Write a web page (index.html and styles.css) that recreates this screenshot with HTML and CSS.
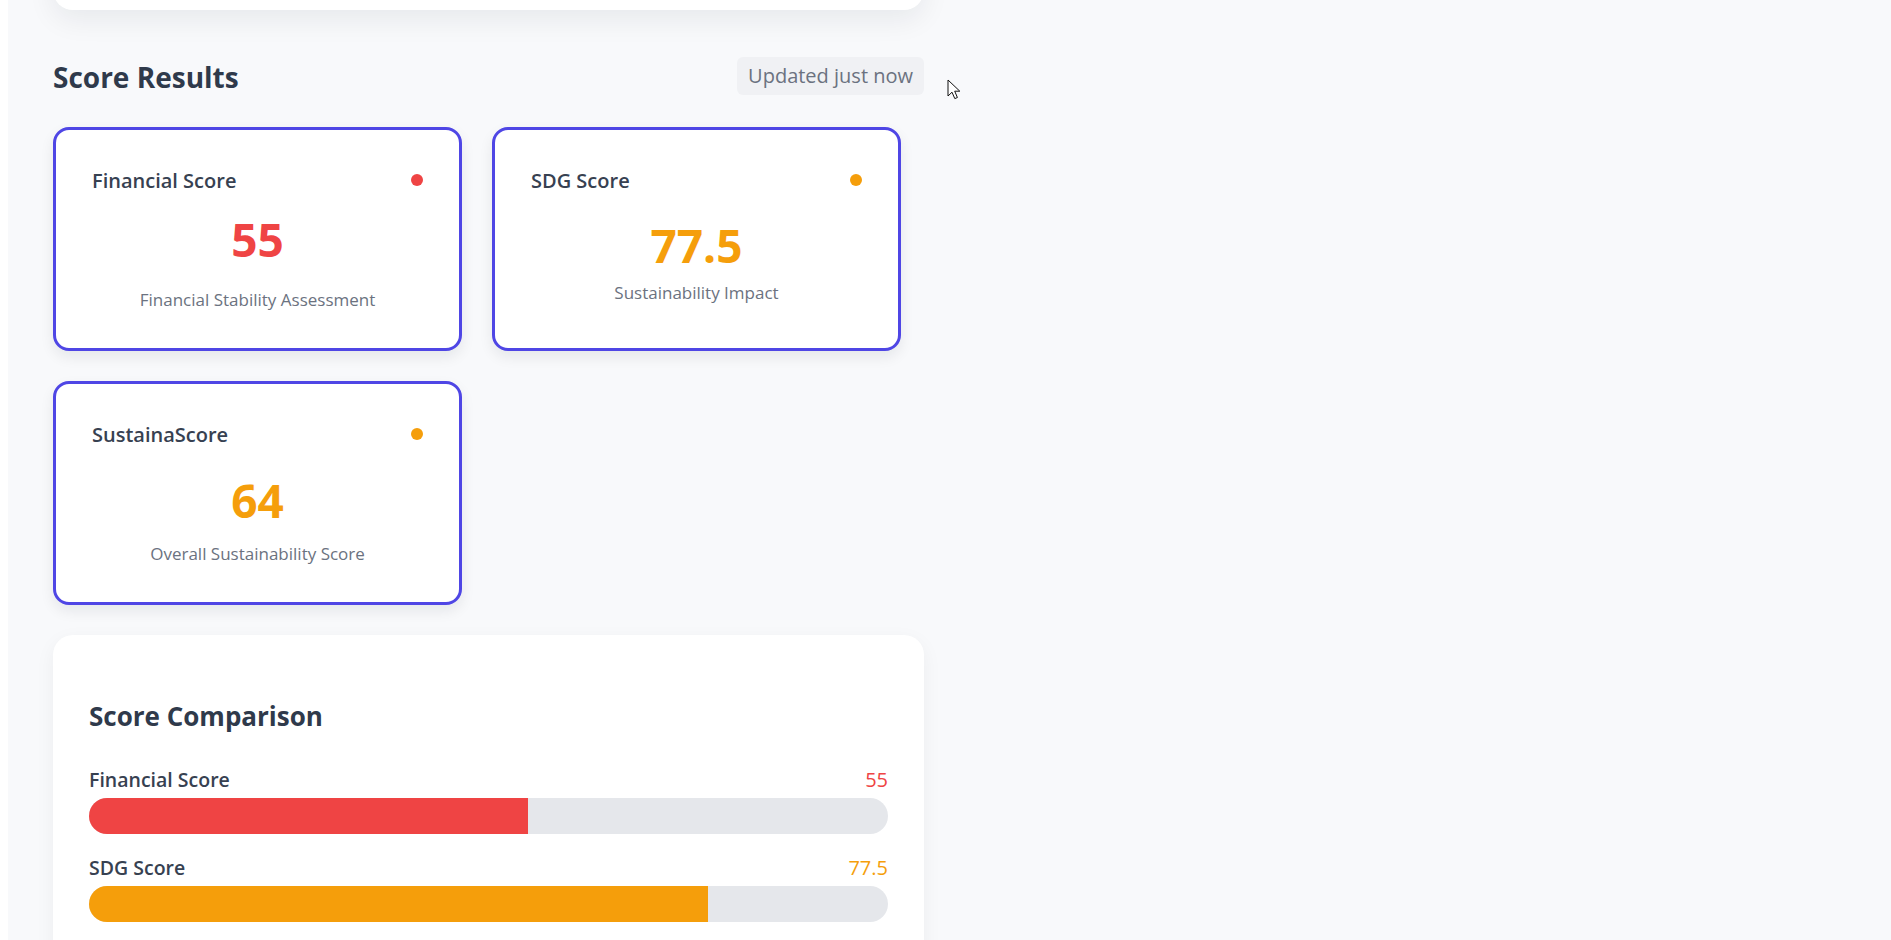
FILE: index.html
```html
<!DOCTYPE html>
<html lang="en">
<head>
<meta charset="utf-8">
<title>Score Results</title>
<link rel="stylesheet" href="styles.css">
</head>
<body>
<div class="page">
  <div class="content">
    <div class="top-card"></div>

    <div class="results-head">
      <h2 class="section-title">Score Results</h2>
      <span class="badge">Updated just now</span>
    </div>

    <div class="score-grid">
      <div class="score-card card-fin">
        <div class="score-card-head">
          <span class="score-card-title">Financial Score</span>
          <span class="dot dot-red"></span>
        </div>
        <div class="score-value red">55</div>
        <div class="score-desc">Financial Stability Assessment</div>
      </div>

      <div class="score-card card-sdg">
        <div class="score-card-head">
          <span class="score-card-title">SDG Score</span>
          <span class="dot dot-orange"></span>
        </div>
        <div class="score-value orange">77.5</div>
        <div class="score-desc">Sustainability Impact</div>
      </div>

      <div class="score-card card-sus">
        <div class="score-card-head">
          <span class="score-card-title">SustainaScore</span>
          <span class="dot dot-orange"></span>
        </div>
        <div class="score-value orange">64</div>
        <div class="score-desc">Overall Sustainability Score</div>
      </div>
    </div>

    <div class="compare-card">
      <h3 class="compare-title">Score Comparison</h3>
      <div class="compare-list">
        <div class="compare-item">
          <div class="compare-row">
            <span class="compare-label">Financial Score</span>
            <span class="compare-num red">55</span>
          </div>
          <div class="track"><div class="fill fill-red" style="width:55%"></div></div>
        </div>
        <div class="compare-item">
          <div class="compare-row">
            <span class="compare-label">SDG Score</span>
            <span class="compare-num orange">77.5</span>
          </div>
          <div class="track"><div class="fill fill-orange" style="width:77.5%"></div></div>
        </div>
      </div>
    </div>
  </div>
</div>

<svg class="cursor" width="14" height="22" viewBox="0 0 14 22" aria-hidden="true">
  <path d="M1 1 L1 17 L5 13.2 L7.8 19.6 L10.4 18.5 L7.7 12.2 L12.8 12.2 Z" fill="#ffffff" stroke="#111111" stroke-width="1" stroke-linejoin="round"/>
</svg>
</body>
</html>
```

FILE: styles.css
```css
html, body {
  margin: 0;
  padding: 0;
  background: #ffffff;
  font-family: "Open Sans", "Noto Sans", "Liberation Sans", sans-serif;
  color: #374151;
  overflow: hidden;
}

.page {
  margin-left: 8px;
  min-height: 940px;
  background: #f8f9fb;
  padding-left: 45px;
}

.content {
  width: 871px;
}

.top-card {
  height: 120px;
  margin-top: -110px;
  background: #ffffff;
  border-radius: 20px;
  box-shadow: 0 10px 28px rgba(17, 24, 39, 0.07);
}

.results-head {
  margin-top: 47px;
  height: 38px;
  display: flex;
  align-items: center;
  justify-content: space-between;
}

.section-title {
  margin: 0;
  font-size: 28px;
  line-height: 38px;
  font-weight: 700;
  color: #2f3a4b;
  position: relative;
  top: 1px;
}

.badge {
  background: #f0f1f4;
  color: #6b7280;
  font-size: 20px;
  line-height: 26px;
  padding: 6px 11px;
  border-radius: 6px;
}

.score-grid {
  margin-top: 32px;
  display: grid;
  grid-template-columns: 409px 409px;
  column-gap: 30px;
  row-gap: 30px;
}

.score-card {
  box-sizing: border-box;
  height: 224px;
  background: #ffffff;
  border: 3px solid #4f46e5;
  border-radius: 16px;
  padding: 37px 36px 0 36px;
  box-shadow: 0 6px 14px rgba(17, 24, 39, 0.08);
}

.score-card-head {
  height: 28px;
  display: flex;
  align-items: center;
  justify-content: space-between;
}

.score-card-title {
  font-size: 20px;
  font-weight: 600;
  line-height: 28px;
  color: #374151;
}

.dot {
  width: 12px;
  height: 12px;
  border-radius: 50%;
  margin-top: -2px;
}

.dot-red { background: #ef4444; }
.dot-orange { background: #f59e0b; }

.red { color: #ef4444; }
.orange { color: #f59e0b; }

.score-value {
  text-align: center;
  font-size: 46px;
  font-weight: 700;
  line-height: 56px;
  margin-top: 23px;
}

.score-desc {
  text-align: center;
  font-size: 17px;
  line-height: 24px;
  color: #6b7280;
  margin-top: 14px;
}

.card-fin .score-value { margin-top: 16px; }
.card-fin .score-desc { margin-top: 21px; }
.card-sdg .score-value { margin-top: 22px; }
.card-sdg .score-desc { margin-top: 8px; }

.compare-card {
  margin-top: 30px;
  background: #ffffff;
  border-radius: 20px;
  padding: 61px 36px 36px 36px;
  box-shadow: 0 6px 20px rgba(17, 24, 39, 0.05);
  min-height: 400px;
}

.compare-title {
  margin: 0;
  font-size: 26px;
  line-height: 40px;
  font-weight: 700;
  color: #2f3a4b;
}

.compare-list {
  margin-top: 29px;
  display: flex;
  flex-direction: column;
  gap: 19px;
}

.compare-item {
  display: flex;
  flex-direction: column;
  gap: 5px;
}

.compare-row {
  display: flex;
  justify-content: space-between;
  align-items: center;
  height: 28px;
}

.compare-label {
  font-size: 19.5px;
  font-weight: 600;
  color: #374151;
}

.compare-num {
  font-size: 20px;
  font-weight: 500;
}

.track {
  height: 36px;
  background: #e5e7eb;
  border-radius: 18px;
  overflow: hidden;
}

.fill {
  height: 100%;
}

.fill-red { background: #ef4444; }
.fill-orange { background: #f59e0b; }

.cursor {
  position: absolute;
  left: 947px;
  top: 79px;
}
```
